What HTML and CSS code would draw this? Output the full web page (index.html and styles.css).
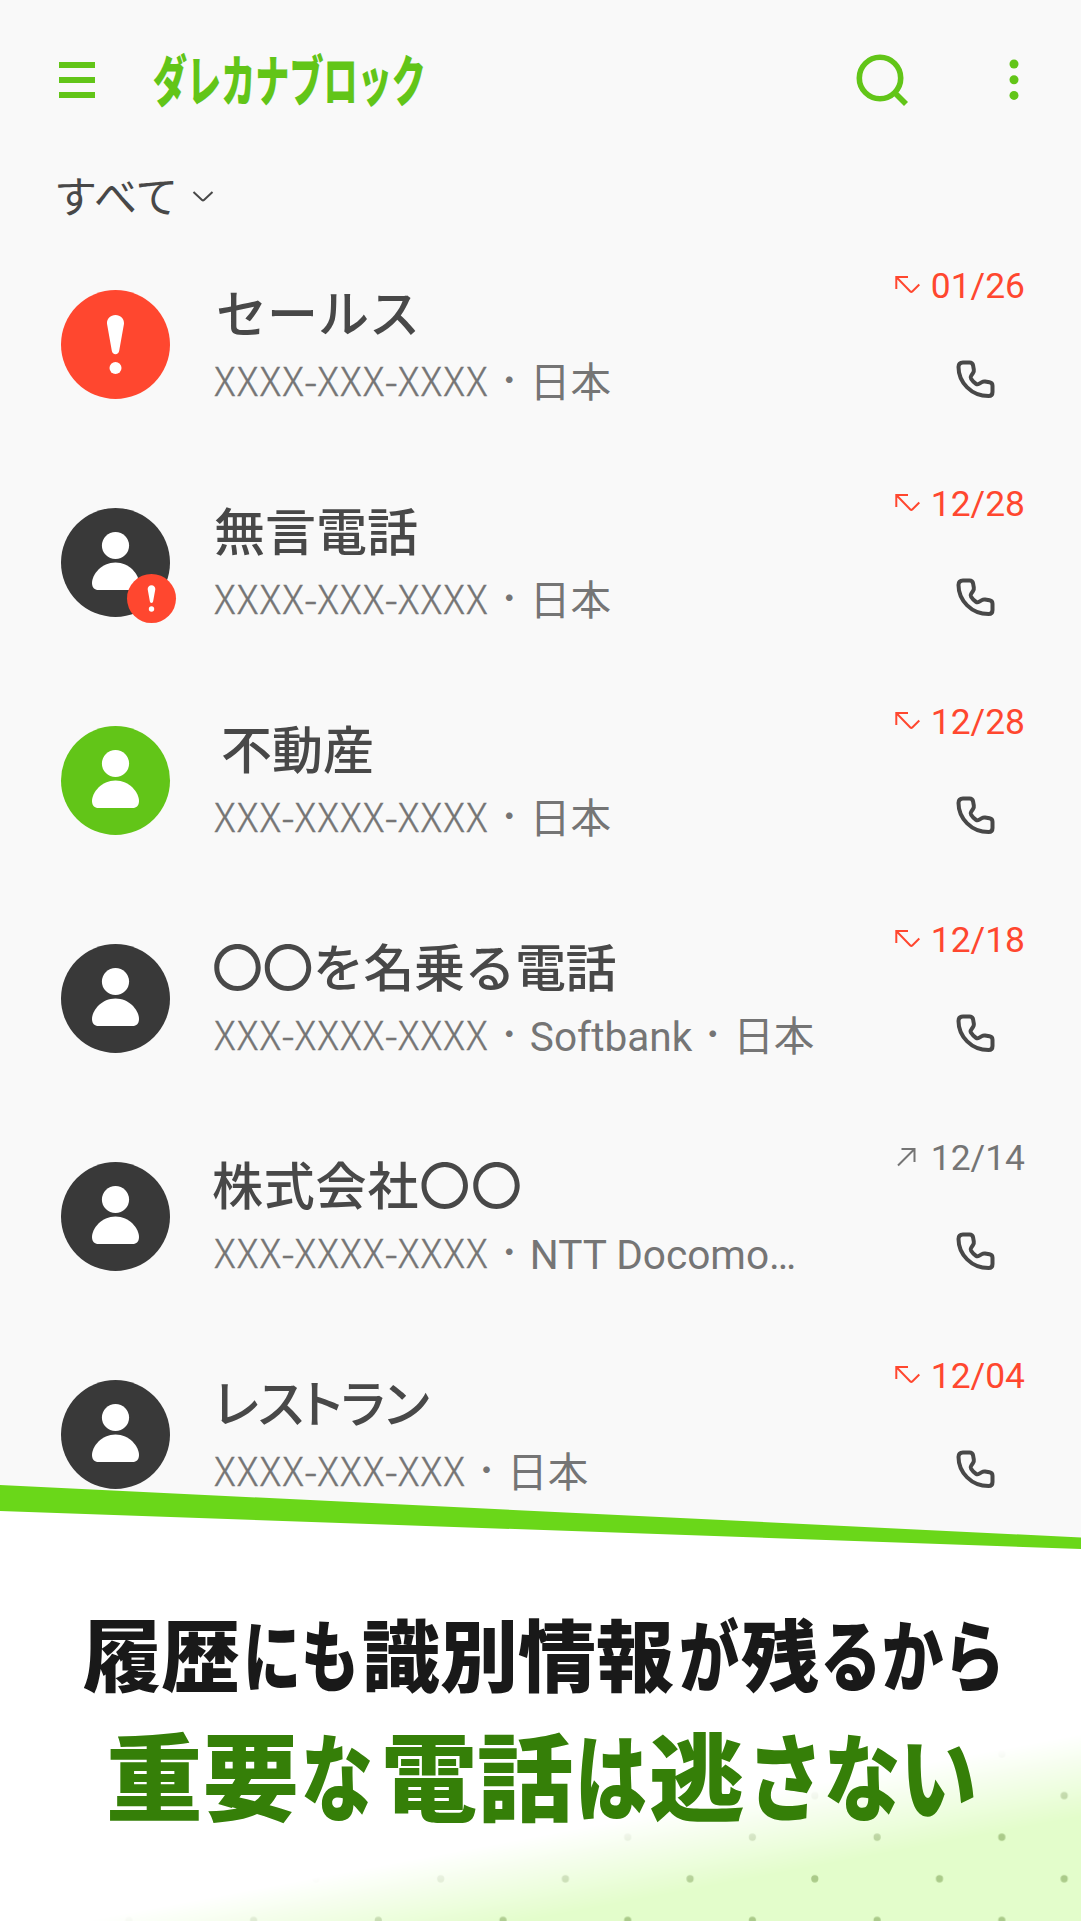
FILE: index.html
```
<!DOCTYPE html>
<html lang="ja">
<head>
    <meta charset="UTF-8">
    <meta name="viewport" content="width=device-width, initial-scale=1.0">
    <title>ダレカナブロック</title>
    <link rel="stylesheet" href="styles.css">
</head>
<body>
    <!-- Shared icons -->
    <svg class="sprite" width="0" height="0">
        <symbol id="person" viewBox="0 0 109 109">
            <ellipse cx="54.500" cy="37.500" rx="13.600" ry="13.600"/>
            <path d="M54.5 54.5c-14 0-23.5 12-23.5 20.500 0 4.500 2.500 7 6.500 7h34c4 0 6.500-2.500 6.500-7 0-8.500-9.500-20.500-23.500-20.500z"/>
        </symbol>
        <symbol id="alert" viewBox="0 0 109 109">
            <path d="M54.500 25c-5 0-8.800 3.800-8.500 8.800l4.800 27c.4 2.200 1.800 3.500 3.700 3.500s3.300-1.300 3.700-3.500l4.800-27c.3-5-3.500-8.800-8.500-8.800z"/>
            <circle cx="54.500" cy="78" r="6"/>
        </symbol>
        <symbol id="phone" viewBox="0 0 40 40">
            <path d="M7 2.500h6.500c2 0 3.200 1 3.600 3l.7 4c.2 1.300 0 2.300-.7 3.300l-2 3c-.7 1-.7 2 0 3 1.200 2 2.800 3.700 4.800 5 1 .7 2 .7 3 .1l3-1.800c1-.6 2-.8 3.200-.6l4.400.8c2 .4 3 1.600 3 3.500v6.200c0 2.500-1.300 4-3.900 4C15.500 36 2.500 22.500 2.500 7c0-2.800 1.500-4.500 4.500-4.500z"/>
        </symbol>
        <symbol id="missed" viewBox="0 0 26 20">
            <path d="M14 2H2.300v12M2.300 2l14 14.500q1 .8 2 0l7-7"/>
        </symbol>
        <symbol id="outgoing" viewBox="0 0 26 20">
            <path d="M7.500 2h13v13M20.500 2L4 18.500"/>
        </symbol>
    </svg>

    <div class="screen">
        <header class="header">
            <svg class="menu" width="36" height="36" viewBox="0 0 36 36"><path d="M0 3h36M0 18h36M0 33h36"/></svg>
            <svg class="logo" width="276" height="80" viewBox="0 0 276 80">
                <text x="1" y="61" textLength="273" lengthAdjust="spacingAndGlyphs">ダレカナブロック</text>
            </svg>
            <svg class="search" width="52" height="52" viewBox="0 0 52 52"><circle cx="24" cy="24" r="20.700"/><path d="M39 39l11 11"/></svg>
            <svg class="more" width="10" height="42" viewBox="0 0 10 42"><circle cx="5" cy="5" r="4.500"/><circle cx="5" cy="20.700" r="4.500"/><circle cx="5" cy="36.400" r="4.500"/></svg>
        </header>

        <div class="filter">
            <span>すべて</span>
            <svg width="22" height="12" viewBox="0 0 22 12"><path d="M1.500 1l8.500 8q1 .8 2 0l8.500-8"/></svg>
        </div>

        <ul class="calls">
            <li class="call">
                <div class="avatar red"><svg><use href="#alert"/></svg></div>
                <div class="info">
                    <div class="name sales">セールス</div>
                    <div class="detail"><span class="number">XXXX-XXX-XXXX</span><span class="dot">・</span><span>日本</span></div>
                </div>
                <div class="side">
                    <div class="date missed"><svg><use href="#missed"/></svg>01/26</div>
                    <svg class="phone"><use href="#phone"/></svg>
                </div>
            </li>
            <li class="call">
                <div class="avatar"><svg><use href="#person"/></svg><div class="badge"><svg><use href="#alert"/></svg></div></div>
                <div class="info">
                    <div class="name">無言電話</div>
                    <div class="detail"><span class="number">XXXX-XXX-XXXX</span><span class="dot">・</span><span>日本</span></div>
                </div>
                <div class="side">
                    <div class="date missed"><svg><use href="#missed"/></svg>12/28</div>
                    <svg class="phone"><use href="#phone"/></svg>
                </div>
            </li>
            <li class="call">
                <div class="avatar green"><svg><use href="#person"/></svg></div>
                <div class="info">
                    <div class="name indent">不動産</div>
                    <div class="detail"><span class="number">XXX-XXXX-XXXX</span><span class="dot">・</span><span>日本</span></div>
                </div>
                <div class="side">
                    <div class="date missed"><svg><use href="#missed"/></svg>12/28</div>
                    <svg class="phone"><use href="#phone"/></svg>
                </div>
            </li>
            <li class="call">
                <div class="avatar"><svg><use href="#person"/></svg></div>
                <div class="info">
                    <div class="name tight">〇〇を名乗る電話</div>
                    <div class="detail"><span class="number">XXX-XXXX-XXXX</span><span class="dot">・</span><span>Softbank</span><span class="dot">・</span><span>日本</span></div>
                </div>
                <div class="side">
                    <div class="date missed"><svg><use href="#missed"/></svg>12/18</div>
                    <svg class="phone"><use href="#phone"/></svg>
                </div>
            </li>
            <li class="call">
                <div class="avatar"><svg><use href="#person"/></svg></div>
                <div class="info">
                    <div class="name wide">株式会社〇〇</div>
                    <div class="detail"><span class="number">XXX-XXXX-XXXX</span><span class="dot">・</span><span>NTT Docomo…</span></div>
                </div>
                <div class="side">
                    <div class="date"><svg><use href="#outgoing"/></svg>12/14</div>
                    <svg class="phone"><use href="#phone"/></svg>
                </div>
            </li>
            <li class="call">
                <div class="avatar"><svg><use href="#person"/></svg></div>
                <div class="info">
                    <div class="name kana">レストラン</div>
                    <div class="detail"><span class="number">XXXX-XXX-XXX</span><span class="dot">・</span><span>日本</span></div>
                </div>
                <div class="side">
                    <div class="date missed"><svg><use href="#missed"/></svg>12/04</div>
                    <svg class="phone"><use href="#phone"/></svg>
                </div>
            </li>
        </ul>

        <!-- Slanted promo banner over the bottom of the list -->
        <svg class="banner" width="1081" height="436" viewBox="0 1485 1081 436">
            <defs>
                <linearGradient id="fade" gradientUnits="userSpaceOnUse" x1="840" y1="1779" x2="855" y2="1859">
                    <stop offset="0" stop-color="#fff" stop-opacity="0"/>
                    <stop offset="1" stop-color="#fff"/>
                </linearGradient>
                <pattern id="dots" patternUnits="userSpaceOnUse" x="596.500" y="1816.400" width="124.700" height="83.200">
                    <circle cx="31.200" cy="20.800" r="3.600"/>
                    <circle cx="93.600" cy="62.400" r="3.600"/>
                </pattern>
                <mask id="corner" maskUnits="userSpaceOnUse" x="0" y="1485" width="1081" height="436">
                    <rect x="0" y="1485" width="1081" height="436" fill="url(#fade)"/>
                </mask>
            </defs>
            <path class="paper" d="M0 1498L1081 1543V1921H0z"/>
            <g mask="url(#corner)">
                <rect class="tint" x="0" y="1600" width="1081" height="321"/>
                <rect x="0" y="1600" width="1081" height="321" fill="url(#dots)"/>
            </g>
            <path class="stripe" d="M0 1485L1081 1537.500V1549L0 1511z"/>
            <g class="line1">
                <text x="83" y="1686" textLength="157" lengthAdjust="spacingAndGlyphs">履歴</text>
                <text x="243" y="1686" textLength="116" lengthAdjust="spacingAndGlyphs">にも</text>
                <text x="362" y="1686" textLength="312" lengthAdjust="spacingAndGlyphs">識別情報</text>
                <text x="679" y="1686" textLength="60" lengthAdjust="spacingAndGlyphs">が</text>
                <text x="741" y="1686" textLength="78" lengthAdjust="spacingAndGlyphs">残</text>
                <text x="820" y="1686" textLength="185" lengthAdjust="spacingAndGlyphs">るから</text>
            </g>
            <g class="line2">
                <text x="106" y="1814" textLength="193" lengthAdjust="spacingAndGlyphs">重要</text>
                <text x="301" y="1814" textLength="72" lengthAdjust="spacingAndGlyphs">な</text>
                <text x="381" y="1814" textLength="192" lengthAdjust="spacingAndGlyphs">電話</text>
                <text x="575" y="1814" textLength="72" lengthAdjust="spacingAndGlyphs">は</text>
                <text x="649" y="1814" textLength="96" lengthAdjust="spacingAndGlyphs">逃</text>
                <text x="747" y="1814" textLength="230" lengthAdjust="spacingAndGlyphs">さない</text>
            </g>
        </svg>
    </div>
</body>
</html>
```
FILE: styles.css
```
body {
    margin: 0;
    background-color: #f9f9f9;
    color: #484848;
    font-family: Roboto, "Noto Sans CJK JP", sans-serif;
}
.sprite {
    display: block;
}
.screen {
    position: relative;
    width: 1081px;
    height: 1921px;
    overflow: hidden;
}
.header {
    display: flex;
    align-items: center;
    box-sizing: border-box;
    height: 160px;
    padding: 0 62px 0 59px;
}
.menu {
    fill: none;
    stroke: #62c518;
    stroke-width: 6;
}
.logo {
    margin-left: 57px;
    overflow: visible;
    fill: #62c518;
    font-family: "Noto Sans CJK JP", sans-serif;
    font-size: 55px;
    font-weight: 900;
}
.search {
    margin-left: auto;
    fill: none;
    stroke: #62c518;
    stroke-width: 5.6;
}
.more {
    margin-left: 101px;
    fill: #62c518;
}
.filter {
    display: flex;
    align-items: center;
    gap: 14px;
    height: 72px;
    padding-left: 54px;
    font-family: "Noto Sans CJK JP", sans-serif;
    font-size: 43px;
    line-height: 68px;
}
.filter span {
    height: 72px;
}
.filter svg {
    padding-top: 2px;
    fill: none;
    stroke: #484848;
    stroke-width: 2;
}
.calls {
    margin: 0;
    padding: 22px 0 0;
    list-style: none;
}
.call {
    display: flex;
    box-sizing: border-box;
    height: 218px;
    padding: 36px 56px 0 61px;
}
.avatar {
    position: relative;
    width: 109px;
    height: 109px;
    border-radius: 50%;
    background-color: #393939;
}
.avatar svg {
    display: block;
    width: 100%;
    height: 100%;
    fill: #fff;
}
.avatar.red {
    background-color: #ff472f;
}
.avatar.green {
    background-color: #62c518;
}
.badge {
    position: absolute;
    left: 66px;
    top: 66px;
    width: 49px;
    height: 49px;
    border-radius: 50%;
    background-color: #ff472f;
}
.info {
    flex: 1;
    margin-left: 44px;
}
.name {
    height: 50px;
    font-family: "Noto Sans CJK JP", sans-serif;
    font-size: 51px;
    font-weight: 500;
    line-height: 43px;
    white-space: nowrap;
}
.name.sales {
    padding-left: 2px;
}
.name.indent {
    padding-left: 7px;
}
.name.tight {
    margin-left: -2px;
    letter-spacing: -0.5px;
}
.name.wide {
    margin-left: -2px;
    letter-spacing: 0.8px;
}
.name.kana {
    font-feature-settings: "palt";
    letter-spacing: -1px;
}
.detail {
    display: flex;
    height: 60px;
    color: #757575;
    font-size: 40.6px;
    line-height: 86px;
    white-space: nowrap;
}
.number {
    font-family: "Noto Sans CJK JP", sans-serif;
    font-size: 40px;
    font-weight: 300;
    letter-spacing: 1.1px;
    line-height: 79px;
    -webkit-text-stroke: 0.4px #757575;
}
.dot {
    width: 41px;
    font-family: "Noto Sans CJK JP", sans-serif;
    font-size: 31px;
    line-height: 76px;
    text-align: center;
}
.side {
    display: flex;
    flex-direction: column;
    align-items: flex-end;
    margin-top: -25px;
}
.date {
    display: flex;
    align-items: center;
    gap: 11px;
    color: #757575;
    font-size: 35.4px;
    line-height: 42px;
}
.date svg {
    width: 26px;
    height: 20px;
    margin-top: -2px;
    fill: none;
    stroke: currentColor;
    stroke-width: 2;
}
.date.missed {
    color: #ff472f;
}
.phone {
    width: 40px;
    height: 40px;
    margin: 53px 29px 0 0;
    fill: none;
    stroke: #484848;
    stroke-width: 4;
}
.banner {
    position: absolute;
    left: 0;
    bottom: 0;
    font-family: "Noto Sans CJK JP", sans-serif;
    font-weight: 900;
}
.paper {
    fill: #fff;
}
.tint {
    fill: #e3fdcb;
}
#dots circle {
    fill: #abcb8a;
}
.stripe {
    fill: #6ad719;
}
.line1 {
    fill: #191919;
    font-size: 78px;
}
.line2 {
    fill: #357f08;
    font-size: 95px;
}
```
